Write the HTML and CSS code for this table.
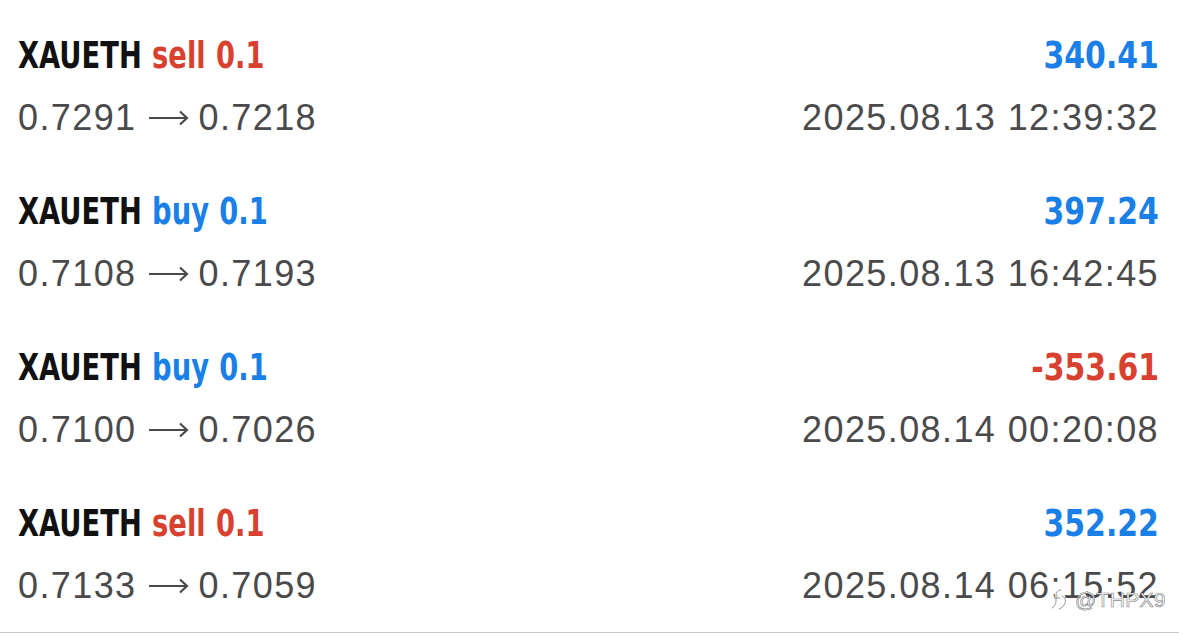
FILE: index.html
```html
<!DOCTYPE html>
<html>
<head>
<meta charset="utf-8">
<link rel="stylesheet" href="styles.css">
</head>
<body>
<div class="list">
  <div class="row">
    <div class="line top">
      <div class="title">XAUETH <span class="sell">sell 0.1</span></div>
      <div class="profit pos">340.41</div>
    </div>
    <div class="line sub">
      <div class="prices">0.7291<svg class="arrow" width="40" height="16" viewBox="0 0 40 16"><path d="M0 8H38M31 1.5L38 8L31 14.5" fill="none" stroke="#4a4a4c" stroke-width="2.2"/></svg>0.7218</div>
      <div>2025.08.13 12:39:32</div>
    </div>
  </div>
  <div class="row">
    <div class="line top">
      <div class="title">XAUETH <span class="buy">buy 0.1</span></div>
      <div class="profit pos">397.24</div>
    </div>
    <div class="line sub">
      <div class="prices">0.7108<svg class="arrow" width="40" height="16" viewBox="0 0 40 16"><path d="M0 8H38M31 1.5L38 8L31 14.5" fill="none" stroke="#4a4a4c" stroke-width="2.2"/></svg>0.7193</div>
      <div>2025.08.13 16:42:45</div>
    </div>
  </div>
  <div class="row">
    <div class="line top">
      <div class="title">XAUETH <span class="buy">buy 0.1</span></div>
      <div class="profit neg">-353.61</div>
    </div>
    <div class="line sub">
      <div class="prices">0.7100<svg class="arrow" width="40" height="16" viewBox="0 0 40 16"><path d="M0 8H38M31 1.5L38 8L31 14.5" fill="none" stroke="#4a4a4c" stroke-width="2.2"/></svg>0.7026</div>
      <div>2025.08.14 00:20:08</div>
    </div>
  </div>
  <div class="row">
    <div class="line top">
      <div class="title">XAUETH <span class="sell">sell 0.1</span></div>
      <div class="profit pos">352.22</div>
    </div>
    <div class="line sub">
      <div class="prices">0.7133<svg class="arrow" width="40" height="16" viewBox="0 0 40 16"><path d="M0 8H38M31 1.5L38 8L31 14.5" fill="none" stroke="#4a4a4c" stroke-width="2.2"/></svg>0.7059</div>
      <div>2025.08.14 06:15:52</div>
    </div>
  </div>
  <div class="rule"></div>
</div>
<div class="watermark">
  <svg class="wm-icon" width="20" height="24" viewBox="0 0 20 24"><g fill="none" stroke-linecap="round"><path d="M12 2c-4 0-5 3-5 6v5c0 3-1 5-4 7M5 10h6M13 8c3 1 4 4 3 7-1 3-3 5-6 6" stroke="#fff" stroke-width="2.4"/><path d="M12 2c-4 0-5 3-5 6v5c0 3-1 5-4 7M5 10h6M13 8c3 1 4 4 3 7-1 3-3 5-6 6" stroke="rgba(0,0,0,0.5)" stroke-width="0.8"/></g></svg>
  <span class="wm-text">@THPX9</span>
</div>
</body>
</html>
```
FILE: styles.css
```css
html, body {
  margin: 0;
  padding: 0;
  background: #ffffff;
}
body {
  width: 1179px;
  height: 635px;
  overflow: hidden;
  position: relative;
}
.list {
  padding: 0 20px 0 18px;
}
.row {
  height: 156px;
  box-sizing: border-box;
  padding-top: 33px;
  display: flex;
  flex-direction: column;
  gap: 19px;
}
.line {
  display: flex;
  justify-content: space-between;
  align-items: center;
  height: 44px;
}
.top {
  font-family: "DejaVu Sans Condensed", "DejaVu Sans", sans-serif;
  font-stretch: condensed;
  font-weight: 700;
  font-size: 38px;
  color: #111111;
}
.title {
  display: inline-block;
  white-space: nowrap;
  transform: scaleX(0.8);
  transform-origin: left center;
  word-spacing: 1px;
}
.profit {
  display: inline-block;
  white-space: nowrap;
  transform: scaleX(0.875);
  transform-origin: right center;
}
.sell, .neg { color: #d8402f; }
.buy, .pos { color: #1a7fe6; }
.sub {
  font-family: "Liberation Sans", Arial, sans-serif;
  font-size: 36px;
  letter-spacing: 1.4px;
  color: #4a4a4c;
}
.prices {
  display: flex;
  align-items: center;
}
.arrow {
  margin: 0 10px 0 12px;
}
.rule {
  margin: 8px -20px 0 -18px;
  border-top: 1px solid #c8c8c8;
}
.watermark {
  position: absolute;
  left: 1049px;
  top: 588px;
  display: flex;
  align-items: center;
  gap: 6px;
}
.wm-text {
  font-family: "Liberation Sans", Arial, sans-serif;
  font-size: 21px;
  color: #ffffff;
  -webkit-text-stroke: 0.7px rgba(0,0,0,0.5);
  letter-spacing: 0.3px;
}
```
